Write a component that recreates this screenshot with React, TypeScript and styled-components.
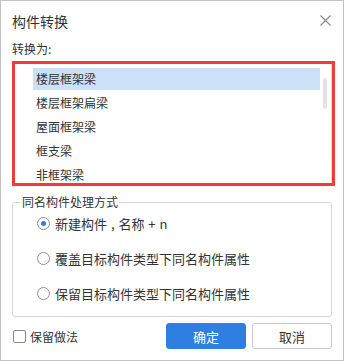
import React, { useState } from 'react';
import styled, { createGlobalStyle } from 'styled-components';

const GlobalStyle = createGlobalStyle`
  html, body {
    margin: 0;
    padding: 0;
    background: #ffffff;
  }
  body {
    font-family: "Noto Sans CJK SC", "Noto Sans", "Liberation Sans", sans-serif;
    color: #333333;
  }
  * {
    box-sizing: border-box;
  }
`;

const TYPES = ['楼层框架梁', '楼层框架扁梁', '屋面框架梁', '框支梁', '非框架梁', '井字梁'];

const MODES = [
  '新建构件 , 名称 + n',
  '覆盖目标构件类型下同名构件属性',
  '保留目标构件类型下同名构件属性',
];

const Window = styled.div`
  width: 344px;
  height: 361px;
  border: 1px solid #c4c4c4;
  background: #ffffff;
  display: flex;
  flex-direction: column;
  padding: 0 11px;
`;

const Header = styled.div`
  height: 39px;
  display: flex;
  align-items: center;
  justify-content: space-between;
`;

const Title = styled.div`
  font-size: 14px;
  line-height: 20px;
  color: #333333;
`;

const CloseButton = styled.button`
  border: none;
  background: none;
  padding: 0;
  margin-right: 1px;
  width: 12px;
  height: 12px;
  display: flex;
  align-items: center;
  justify-content: center;
  cursor: pointer;
`;

const Label = styled.div`
  font-size: 12px;
  line-height: 18px;
  color: #333333;
`;

const ListBox = styled.div`
  position: relative;
  margin-top: 3px;
  margin-right: -3px;
  height: 125px;
  border: 3px solid #f23a3a;
  overflow: hidden;
`;

const ListInner = styled.div`
  height: 100%;
  border-right: 1px solid #dcdcdc;
  padding: 4px 11px 0 18px;
  display: flex;
  flex-direction: column;
  gap: 2px;
`;

const Item = styled.div<{ $selected: boolean }>`
  flex: none;
  height: 22px;
  line-height: 22px;
  padding-left: 3px;
  font-size: 12px;
  color: #333333;
  background: ${p => (p.$selected ? '#cce0f8' : 'transparent')};
  cursor: default;
`;

const ScrollThumb = styled.div`
  position: absolute;
  top: 14px;
  right: 5px;
  width: 4px;
  height: 31px;
  border-radius: 2px;
  background: #e4e4e4;
`;

const Group = styled.fieldset`
  margin: 8px 0 0;
  padding: 0;
  border: 1px solid #d6d6d6;
  border-radius: 3px;
`;

const Legend = styled.legend`
  margin-left: 8px;
  padding: 0 1px;
  font-size: 12px;
  line-height: 16px;
  color: #333333;
`;

const RadioList = styled.div`
  padding: 3px 0 13px 24px;
  display: flex;
  flex-direction: column;
  gap: 15px;
`;

const RadioRow = styled.label`
  height: 20px;
  display: flex;
  align-items: center;
  gap: 5px;
  font-size: 13px;
  word-spacing: 1px;
  color: #333333;
  cursor: pointer;
`;

const RadioCircle = styled.span<{ $checked: boolean }>`
  flex: none;
  width: 13px;
  height: 13px;
  border-radius: 50%;
  border: 1px solid #8f8f8f;
  background: #ffffff;
  display: flex;
  align-items: center;
  justify-content: center;
  &::after {
    content: '';
    width: 5px;
    height: 5px;
    border-radius: 50%;
    background: ${p => (p.$checked ? '#2f7fe2' : 'transparent')};
  }
`;

const Footer = styled.div`
  margin-top: 6px;
  display: flex;
  align-items: center;
  gap: 6px;
`;

const CheckRow = styled.label`
  flex: 1;
  display: flex;
  align-items: center;
  gap: 4px;
  padding-left: 1px;
  font-size: 12px;
  color: #333333;
  cursor: pointer;
`;

const CheckBox = styled.span`
  width: 13px;
  height: 13px;
  border: 1px solid #8a8a8a;
  border-radius: 2px;
  background: #ffffff;
`;

const Button = styled.button<{ $primary?: boolean }>`
  width: 80px;
  height: 26px;
  border-radius: 3px;
  font-family: inherit;
  font-size: 13px;
  border: 1px solid ${p => (p.$primary ? '#2f7fe2' : '#c9c9c9')};
  background: ${p => (p.$primary ? '#2f7fe2' : '#ffffff')};
  color: ${p => (p.$primary ? '#ffffff' : '#333333')};
  cursor: pointer;
`;

const App = () => {
  const [selected, setSelected] = useState(0);
  const [mode, setMode] = useState(0);

  return (
    <>
      <GlobalStyle />
      <Window>
        <Header>
          <Title>构件转换</Title>
          <CloseButton aria-label="关闭">
            <svg width="11" height="11" viewBox="0 0 11 11">
              <path d="M0.5 0.5 L10.5 10.5 M10.5 0.5 L0.5 10.5" stroke="#8a8a8a" strokeWidth="1.2" />
            </svg>
          </CloseButton>
        </Header>
        <Label>转换为:</Label>
        <ListBox>
          <ListInner>
            {TYPES.map((t, i) => (
              <Item key={t} $selected={i === selected} onClick={() => setSelected(i)}>
                {t}
              </Item>
            ))}
          </ListInner>
          <ScrollThumb />
        </ListBox>
        <Group>
          <Legend>同名构件处理方式</Legend>
          <RadioList>
            {MODES.map((m, i) => (
              <RadioRow key={m} onClick={() => setMode(i)}>
                <RadioCircle $checked={i === mode} />
                {m}
              </RadioRow>
            ))}
          </RadioList>
        </Group>
        <Footer>
          <CheckRow>
            <CheckBox />
            保留做法
          </CheckRow>
          <Button $primary>确定</Button>
          <Button>取消</Button>
        </Footer>
      </Window>
    </>
  );
};

export default App;
